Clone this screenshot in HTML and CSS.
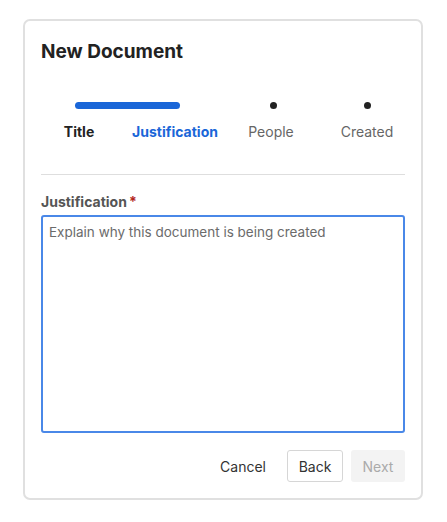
FILE: index.html
```html
<!DOCTYPE html>
<html>
<head>
<meta charset="utf-8">
<link rel="stylesheet" href="styles.css">
</head>
<body>
<div class="card">
  <h1 class="title">New Document</h1>
  <div class="stepper">
    <div class="step done">
      <div class="track"><span class="bar"></span></div>
      <div class="label">Title</div>
    </div>
    <div class="step current">
      <div class="track"></div>
      <div class="label">Justification</div>
    </div>
    <div class="step people">
      <div class="track"><span class="dot"></span></div>
      <div class="label">People</div>
    </div>
    <div class="step">
      <div class="track"><span class="dot"></span></div>
      <div class="label">Created</div>
    </div>
  </div>
  <hr class="divider">
  <label class="field-label" for="just">Justification<span class="req">*</span></label>
  <textarea id="just" class="textarea" placeholder="Explain why this document is being created" autofocus></textarea>
  <div class="actions">
    <button class="btn btn-text">Cancel</button>
    <button class="btn btn-outline">Back</button>
    <button class="btn btn-disabled" disabled>Next</button>
  </div>
</div>
</body>
</html>
```
FILE: styles.css
```css
* { box-sizing: border-box; }
html, body { margin: 0; background: #fff; }
body {
  font-family: Inter, "Noto Sans", sans-serif;
  color: #222;
  padding: 19px 0 0 23px;
}
.card {
  width: 400px;
  height: 481px;
  border: 2px solid #e0e0e0;
  border-radius: 7px;
  padding: 16px 16px 16px 16px;
  display: flex;
  flex-direction: column;
}
.title {
  margin: 0;
  padding-top: 2px;
  font-size: 19px;
  line-height: 26px;
  font-weight: 700;
  color: #222;
}
.stepper {
  display: grid;
  grid-template-columns: repeat(4, 1fr);
  margin: 37px -10px 0;
}
.step {
  position: relative;
  display: flex;
  flex-direction: column;
  align-items: center;
}
.track {
  height: 7px;
  width: 100%;
  display: flex;
  justify-content: center;
  align-items: center;
}
.bar {
  position: absolute;
  top: 0;
  left: calc(50% - 4px);
  width: 105px;
  height: 7px;
  border-radius: 4px;
  background: #1a66d8;
}
.dot {
  width: 7px;
  height: 7px;
  border-radius: 50%;
  background: #222;
}
.people .dot { margin-left: 4px; }
.label {
  margin-top: 14px;
  font-size: 14px;
  line-height: 18px;
  color: #666;
}
.done .label { color: #222; font-weight: 700; }
.current .label { color: #1a66d8; font-weight: 700; }
.divider {
  border: 0;
  border-top: 1px solid #dedede;
  margin: 33px 0 0;
  width: 100%;
}
.field-label {
  margin-top: 18px;
  font-size: 14px;
  line-height: 18px;
  font-weight: 700;
  color: #555;
}
.req { color: #b3261e; margin-left: 2px; }
.textarea {
  margin-top: 4px;
  height: 218px;
  width: 100%;
  resize: none;
  border: 2px solid #4a88e8;
  border-radius: 3px;
  padding: 6px 6px;
  font-family: Inter, "Noto Sans", sans-serif;
  font-size: 13.5px;
  line-height: 18px;
  color: #222;
  outline: none;
}
.textarea::placeholder { color: #6b6b6b; }
.actions {
  margin-top: auto;
  display: flex;
  justify-content: flex-end;
  gap: 8px;
}
.btn {
  height: 32px;
  padding: 0 12px;
  font-family: Inter, "Noto Sans", sans-serif;
  font-size: 14px;
  border-radius: 3px;
  background: transparent;
  border: 1px solid transparent;
  color: #333;
}
.btn-outline { border-color: #d6d6d6; background: #fff; width: 56px; padding: 0; }
.btn-disabled { background: #f3f3f3; color: #aaa; width: 54px; padding: 0; }
```
